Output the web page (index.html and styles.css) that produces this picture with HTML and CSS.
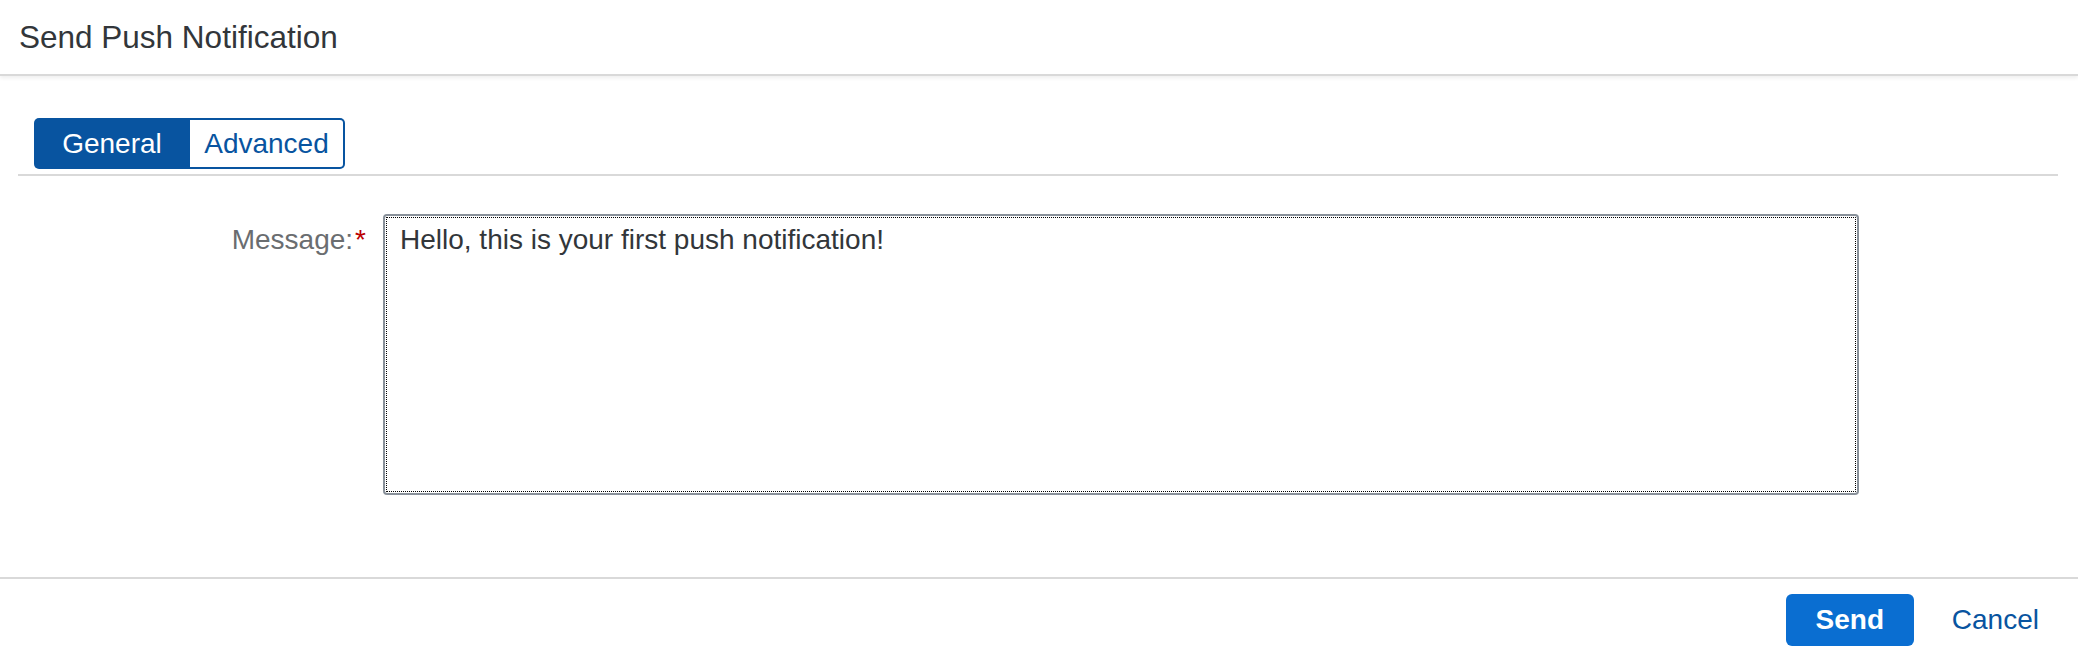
FILE: index.html
```html
<!DOCTYPE html>
<html lang="en">
<head>
<meta charset="utf-8">
<title>Send Push Notification</title>
<link rel="stylesheet" href="styles.css">
</head>
<body>
<div class="dialog">
  <header class="dlg-header">
    <h1 class="dlg-title">Send Push Notification</h1>
  </header>
  <section class="dlg-content">
    <div class="tabbar">
      <div class="seg">
        <button class="seg-btn seg-active">General</button>
        <button class="seg-btn">Advanced</button>
      </div>
    </div>
    <div class="form-row">
      <label class="form-label" for="msg">Message:<span class="req">*</span></label>
      <textarea id="msg" class="msg-input" readonly>Hello, this is your first push notification!</textarea>
    </div>
  </section>
  <footer class="dlg-footer">
    <button class="btn btn-emph">Send</button>
    <button class="btn btn-trans">Cancel</button>
  </footer>
</div>
</body>
</html>
```
FILE: styles.css
```css
* { box-sizing: border-box; }
html, body {
  margin: 0;
  padding: 0;
  background: #ffffff;
  font-family: "Liberation Sans", Arial, sans-serif;
  color: #32363a;
}
.dialog {
  width: 2078px;
  height: 650px;
  display: flex;
  flex-direction: column;
  overflow: hidden;
}
.dlg-header {
  height: 76px;
  padding-left: 19px;
  display: flex;
  align-items: center;
  border-bottom: 2px solid #d9d9d9;
  box-shadow: 0 2px 4px rgba(0, 0, 0, 0.07);
  position: relative;
  z-index: 1;
}
.dlg-title {
  margin: 0;
  font-size: 31.5px;
  font-weight: normal;
  line-height: 1;
  color: #32363a;
  padding-top: 2px;
}
.dlg-content {
  padding: 0 20px 0 18px;
  height: 501px;
}
.tabbar {
  padding-top: 42px;
  padding-left: 16px;
  padding-bottom: 5px;
  border-bottom: 2px solid #d9d9d9;
}
.seg {
  display: flex;
}
.seg-btn {
  height: 51px;
  width: 155px;
  margin: 0;
  padding: 0;
  font-family: "Liberation Sans", Arial, sans-serif;
  font-size: 28px;
  color: #0854a0;
  background: #ffffff;
  border: 2px solid #0854a0;
  border-left: none;
  border-radius: 0 5px 5px 0;
  display: flex;
  align-items: center;
  justify-content: center;
}
.seg-active {
  width: 156px;
  background: #0854a0;
  color: #ffffff;
  border: none;
  border-radius: 5px 0 0 5px;
}
.form-row {
  margin-top: 38px;
  display: flex;
  align-items: flex-start;
  gap: 17px;
}
.form-label {
  width: 348px;
  text-align: right;
  font-size: 28px;
  line-height: 40px;
  margin-top: 6px;
  color: #6a6d70;
}
.req {
  color: #bb0000;
  margin-left: 2px;
}
.msg-input {
  width: 1476px;
  height: 281px;
  margin: 0;
  padding: 4px 15px;
  font-family: "Liberation Sans", Arial, sans-serif;
  font-size: 28px;
  line-height: 40px;
  color: #32363a;
  background: #ffffff;
  border: 2px solid #89919a;
  border-radius: 4px;
  resize: none;
  outline: 1px dotted #000000;
  outline-offset: -4px;
}
.dlg-footer {
  border-top: 2px solid #d9d9d9;
  padding-top: 15px;
  padding-right: 9px;
  display: flex;
  justify-content: flex-end;
  gap: 8px;
}
.btn {
  height: 52px;
  margin: 0;
  font-family: "Liberation Sans", Arial, sans-serif;
  font-size: 28px;
  border-radius: 6px;
  display: flex;
  align-items: center;
  justify-content: center;
}
.btn-emph {
  width: 128px;
  background: #0a6ed1;
  color: #ffffff;
  font-weight: bold;
  border: none;
}
.btn-trans {
  padding: 0 30px;
  background: transparent;
  color: #0854a0;
  border: none;
}
```
